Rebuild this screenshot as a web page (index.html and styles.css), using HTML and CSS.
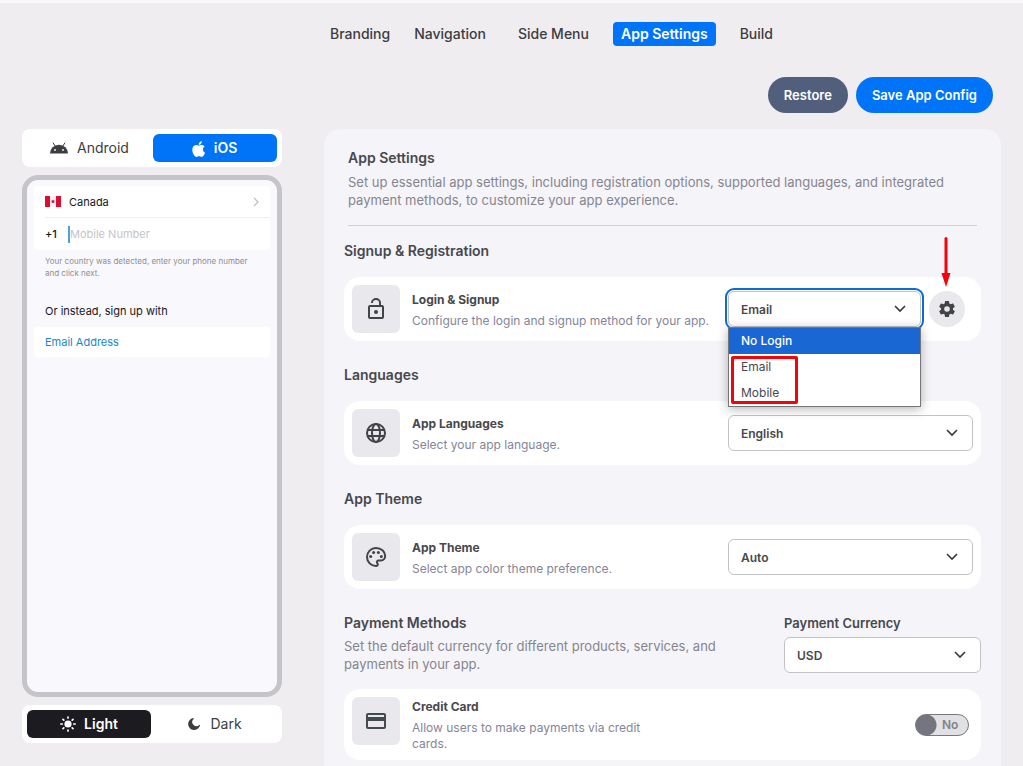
FILE: index.html
```html
<!DOCTYPE html>
<html lang="en">
<head>
<meta charset="utf-8">
<meta name="viewport" content="width=device-width, initial-scale=1">
<title>App Settings</title>
<link rel="stylesheet" href="styles.css">
</head>
<body>
<nav class="tabs">
  <a class="tab" href="#">Branding</a>
  <a class="tab tab-wide" href="#">Navigation</a>
  <a class="tab" href="#">Side Menu</a>
  <a class="tab tab-active" href="#">App Settings</a>
  <a class="tab" href="#">Build</a>
</nav>
<div class="actions">
  <button class="pill pill-slate" type="button">Restore</button>
  <button class="pill pill-blue" type="button">Save App Config</button>
</div>
<div class="columns">
  <aside class="preview">
    <div class="segment">
      <button class="seg" type="button">
        <svg class="ico-android" viewBox="0 0 20 12" aria-hidden="true"><path d="M4.2 1l1.9 3M15.8 1l-1.9 3" stroke="#3c3d41" stroke-width="1" stroke-linecap="round"/><path d="M1 11.5a9 8.8 0 0 1 18 0z" fill="#3c3d41"/><circle cx="6" cy="8" r=".9" fill="#fff"/><circle cx="14" cy="8" r=".9" fill="#fff"/></svg>
        Android
      </button>
      <button class="seg seg-blue" type="button">
        <svg class="ico-apple" viewBox="3.5 0 17 22" aria-hidden="true"><path fill="#fff" d="M17.05 12.54c-.03-2.89 2.36-4.27 2.47-4.34-1.35-1.97-3.44-2.24-4.19-2.27-1.78-.18-3.48 1.05-4.38 1.05-.9 0-2.3-1.02-3.78-1-1.94.03-3.74 1.13-4.74 2.87-2.02 3.51-.52 8.71 1.45 11.56.96 1.39 2.11 2.96 3.62 2.9 1.45-.06 2-.94 3.75-.94s2.25.94 3.78.91c1.56-.03 2.55-1.42 3.51-2.82 1.1-1.62 1.56-3.18 1.58-3.26-.03-.02-3.03-1.16-3.07-4.66zM14.17 4.06c.8-.97 1.34-2.32 1.19-3.66-1.15.05-2.55.77-3.37 1.73-.74.86-1.39 2.23-1.21 3.54 1.28.1 2.59-.65 3.39-1.61z"/></svg>
        iOS
      </button>
    </div>
    <div class="phone">
      <div class="phone-card">
        <div class="country">
          <svg class="flag" viewBox="0 0 16 11" aria-hidden="true"><path fill="#fbf0f2" d="M0 0h16v11H0z"/><path fill="#d80f33" d="M0 0h5v11H0zM11 0h5v11h-5zM8 3.8l.6.8 1-.2-.3 1.2.2.6-1.2.9H7.700l-1.200-.9.2-.6-.3-1.200 1 .2z"/></svg>
          <span class="grow">Canada</span>
          <svg class="ico-next" viewBox="0 0 6 10" aria-hidden="true"><path d="M1 1l4 4-4 4" fill="none" stroke="#bcbcc1" stroke-width="1.200"/></svg>
        </div>
        <div class="number">
          <span class="code">+1</span>
          <input class="number-input" type="tel" placeholder="Mobile Number" aria-label="Mobile Number">
        </div>
      </div>
      <p class="phone-hint">Your country was detected, enter your phone number and click next.</p>
      <p class="phone-alt">Or instead, sign up with</p>
      <a class="phone-email" href="#">Email Address</a>
    </div>
    <div class="segment">
      <button class="seg seg-dark" type="button">
        <svg class="ico-sun" viewBox="0 0 16 16" aria-hidden="true"><circle cx="8" cy="8" r="3.600" fill="#fff"/><path d="M8 1v1M8 14v1M.8 8H2.200M13.800 8h1.400M3 3.400l.8.7M12.200 11.900l.8.7M3 12.600l.8-.7M12.200 4.100l.8-.7" stroke="#fff" stroke-width="1.700" stroke-linecap="round"/></svg>
        Light
      </button>
      <button class="seg" type="button">
        <svg class="ico-moon" viewBox="0 0 12 12" aria-hidden="true"><path fill="#3c3d41" d="M5.200.1A6 6 0 1 0 12 7.200a.5.5 0 0 0-.8-.3A3.900 3.900 0 0 1 5.600 1 .5.5 0 0 0 5.200.1z"/></svg>
        Dark
      </button>
    </div>
  </aside>
  <main class="panel">
    <header class="intro">
      <h1 class="intro-title">App Settings</h1>
      <p class="desc">Set up essential app settings, including registration options, supported languages, and integrated payment methods, to customize your app experience.</p>
    </header>

    <section class="group">
      <h2 class="heading">Signup &amp; Registration</h2>
      <div class="card">
        <span class="tile"><svg class="ico" viewBox="0 0 24 24" aria-hidden="true"><path fill="#414347" d="M12 17a2 2 0 1 0 0-4 2 2 0 0 0 0 4zm6-9h-1V6a5 5 0 0 0-10 0h1.900a3.100 3.100 0 0 1 6.200 0v2H6a2 2 0 0 0-2 2v10a2 2 0 0 0 2 2h12a2 2 0 0 0 2-2V10a2 2 0 0 0-2-2zm0 12H6V10h12z"/></svg></span>
        <div class="info"><label class="name" for="login">Login &amp; Signup</label><p class="note">Configure the login and signup method for your app.</p></div>
        <div class="control control-gear">
          <div class="picker">
            <select class="select select-focus" id="login"><option>Email</option></select>
            <svg class="chev" viewBox="0 0 12 8" aria-hidden="true"><path d="M1 1l5 5 5-5" fill="none" stroke="#36373b" stroke-width="1.600"/></svg>
            <ul class="menu">
              <li class="option option-on">No Login</li>
              <li class="option">Email</li>
              <li class="option">Mobile</li>
            </ul>
            <span class="mark"></span>
          </div>
          <div class="gear-wrap">
            <button class="gear" type="button" aria-label="Login settings"><svg class="ico-gear" viewBox="2 2 20 20" aria-hidden="true"><path fill="#414347" d="M19.430 12.980c.04-.32.07-.64.07-.98s-.03-.66-.07-.98l2.110-1.650c.19-.15.24-.42.12-.64l-2-3.460c-.12-.22-.39-.3-.61-.22l-2.490 1c-.52-.4-1.080-.73-1.690-.98l-.38-2.650A.49.49 0 0 0 14 2h-4c-.25 0-.46.18-.49.42l-.38 2.650c-.61.25-1.170.59-1.690.98l-2.490-1c-.23-.09-.49 0-.61.22l-2 3.460c-.13.22-.07.49.12.64l2.110 1.650c-.04.32-.07.65-.07.98s.03.66.07.98l-2.110 1.650c-.19.15-.24.42-.12.64l2 3.460c.12.22.39.3.61.22l2.490-1c.52.4 1.080.73 1.690.98l.38 2.650c.03.24.24.42.49.42h4c.25 0 .46-.18.49-.42l.38-2.650c.61-.25 1.170-.59 1.690-.98l2.490 1c.23.09.49 0 .61-.22l2-3.460c.12-.22.07-.49-.12-.64zM12 15.500a3.500 3.500 0 1 1 0-7 3.500 3.500 0 0 1 0 7z"/></svg></button>
            <svg class="arrow" viewBox="0 0 10 50" aria-hidden="true"><path d="M5 1.500v37" stroke="#f3040c" stroke-width="3" stroke-linecap="round"/><path d="M.5 36h9L5 50z" fill="#f3040c"/></svg>
          </div>
        </div>
      </div>
    </section>

    <section class="group">
      <h2 class="heading">Languages</h2>
      <div class="card">
        <span class="tile"><svg class="ico" viewBox="0 0 24 24" aria-hidden="true"><g fill="none" stroke="#414347" stroke-width="2"><circle cx="12" cy="12" r="9"/><ellipse cx="12" cy="12" rx="4" ry="9"/><path d="M3.500 9h17M3.500 15h17"/></g></svg></span>
        <div class="info"><label class="name" for="lang">App Languages</label><p class="note">Select your app language.</p></div>
        <div class="control">
          <div class="picker">
            <select class="select" id="lang"><option>English</option></select>
            <svg class="chev" viewBox="0 0 12 8" aria-hidden="true"><path d="M1 1l5 5 5-5" fill="none" stroke="#36373b" stroke-width="1.600"/></svg>
          </div>
        </div>
      </div>
    </section>

    <section class="group">
      <h2 class="heading">App Theme</h2>
      <div class="card">
        <span class="tile"><svg class="ico" viewBox="0 0 24 24" aria-hidden="true"><path d="M12 3a9 9 0 0 0 0 18c1.200 0 1.800-.8 1.800-1.700 0-.5-.2-.8-.5-1.200-.9-1.100-.2-2.600 1.300-2.600H17a4.500 4.500 0 0 0 4.200-4.500C21.200 6.500 17 3 12 3z" fill="none" stroke="#414347" stroke-width="2"/><g fill="#414347"><circle cx="6.700" cy="11.500" r="1.500"/><circle cx="9.600" cy="7.600" r="1.500"/><circle cx="14.400" cy="7.600" r="1.500"/><circle cx="17.300" cy="11.500" r="1.500"/></g></svg></span>
        <div class="info"><label class="name" for="theme">App Theme</label><p class="note">Select app color theme preference.</p></div>
        <div class="control">
          <div class="picker">
            <select class="select" id="theme"><option>Auto</option></select>
            <svg class="chev" viewBox="0 0 12 8" aria-hidden="true"><path d="M1 1l5 5 5-5" fill="none" stroke="#36373b" stroke-width="1.600"/></svg>
          </div>
        </div>
      </div>
    </section>

    <section class="group">
      <div class="payment">
        <div class="payment-text">
          <h2 class="heading">Payment Methods</h2>
          <p class="desc">Set the default currency for different products, services, and payments in your app.</p>
        </div>
        <div class="currency">
          <label class="currency-label" for="currency">Payment Currency</label>
          <div class="picker">
            <select class="select" id="currency"><option>USD</option></select>
            <svg class="chev" viewBox="0 0 12 8" aria-hidden="true"><path d="M1 1l5 5 5-5" fill="none" stroke="#36373b" stroke-width="1.600"/></svg>
          </div>
        </div>
      </div>
      <div class="card">
        <span class="tile"><svg class="ico" viewBox="0 0 24 24" aria-hidden="true"><path fill="#414b50" fill-rule="evenodd" d="M4 4h16a2 2 0 0 1 2 2v12a2 2 0 0 1-2 2H4a2 2 0 0 1-2-2V6a2 2 0 0 1 2-2zm0 2v2h16V6zm0 6v6h16v-6z"/></svg></span>
        <div class="info info-narrow"><span class="name">Credit Card</span><p class="note">Allow users to make payments via credit cards.</p></div>
        <label class="toggle"><input class="toggle-input" type="checkbox" aria-label="Credit Card"><span class="toggle-text">No</span></label>
      </div>
    </section>
  </main>
</div>
</body>
</html>
```
FILE: styles.css
```css
* {
  box-sizing: border-box;
}

body {
  display: flex;
  flex-direction: column;
  margin: 0;
  min-height: 100vh;
  border-top: 3px solid #f9f9fd;
  background: #efedf0;
  color: #47484d;
  font-family: Inter, "Open Sans", sans-serif;
  font-size: 14px;
}

h1, h2, p, ul {
  margin: 0;
  padding: 0;
}

button, select, input {
  margin: 0;
  border: 0;
  background: none;
  color: inherit;
  font: inherit;
}

a {
  color: inherit;
  text-decoration: none;
}

svg {
  display: block;
  flex: none;
}

/* Top navigation */
.tabs {
  display: flex;
  justify-content: center;
  gap: 16px;
  padding: 19px 0 0 80px;
}

.tab {
  padding: 0 8px;
  border-radius: 4px;
  color: #3c3d41;
  font-weight: 500;
  line-height: 24px;
}

.tab-wide {
  margin-left: -8px;
}

.tab-active {
  background: #0074f8;
  color: #fff;
  font-weight: 600;
}

.actions {
  display: flex;
  justify-content: flex-end;
  gap: 8px;
  padding: 31px 30px 16px;
}

.pill {
  height: 36px;
  padding: 0 16px;
  border-radius: 18px;
  color: #fff;
  font-size: 13px;
  font-weight: 600;
}

.pill-slate {
  background: #515f7d;
}

.pill-blue {
  background: #0074f8;
}

.columns {
  flex: 1;
  display: flex;
  gap: 42px;
  padding: 0 22px;
}

/* Device preview */
.preview {
  flex: none;
  display: grid;
  align-content: start;
  gap: 8px;
  width: 260px;
}

.segment {
  display: grid;
  grid-template-columns: 1fr 1fr;
  gap: 2px;
  padding: 5px;
  border-radius: 8px;
  background: #fff;
}

.seg {
  display: flex;
  align-items: center;
  justify-content: center;
  gap: 8px;
  height: 28px;
  padding: 0;
  border-radius: 6px;
  color: #3c3d41;
  line-height: 26px;
}

.seg-blue {
  background: #0074f8;
  color: #fff;
  font-weight: 600;
}

.seg-dark {
  background: #1b1b20;
  color: #fff;
  font-weight: 600;
}

.ico-android {
  width: 20px;
  height: 12px;
}

.ico-apple {
  width: 13px;
  height: 15px;
  overflow: visible;
}

.ico-sun {
  width: 16px;
  height: 16px;
}

.ico-moon {
  width: 12px;
  height: 12px;
  margin-right: 2px;
}

.phone {
  height: 522px;
  padding: 6px 7px;
  border: 5px solid #c4c4c9;
  border-radius: 16px;
  background: #f9f8fd;
  color: #17171a;
  font-size: 11px;
}

.phone-card {
  padding-left: 11px;
  border-radius: 4px;
  background: #fff;
}

.country,
.number {
  display: flex;
  align-items: center;
  height: 32px;
}

.country {
  gap: 8px;
  padding-right: 11px;
  border-bottom: 1px solid #efeff1;
}

.grow {
  flex: 1;
}

.flag {
  width: 16px;
  height: 11px;
}

.ico-next {
  width: 6px;
  height: 10px;
}

.code {
  width: 23px;
  font-weight: 500;
}

.number-input {
  flex: 1;
  min-width: 0;
  height: 17px;
  padding: 0;
  border-left: 2px solid #4aa0e0;
}

.number-input::placeholder {
  color: #c4c4c8;
  opacity: 1;
}

.phone-hint {
  padding: 5px 11px 0;
  color: #8e8e94;
  font-size: 8px;
  line-height: 12px;
}

.phone-alt {
  padding: 24px 11px 8px;
  line-height: 16px;
}

.phone-email {
  display: block;
  padding: 0 11px;
  border-radius: 4px;
  background: #fff;
  color: #1787cd;
  line-height: 30px;
}

/* Settings panel */
.panel {
  flex: 1;
  min-width: 0;
  padding: 19px 20px 6px;
  border-radius: 16px 16px 0 0;
  background: #f5f4f9;
}

.intro {
  margin: 0 4px 15px;
  padding-bottom: 16px;
  border-bottom: 1px solid #d0d0d5;
}

.intro-title {
  margin-bottom: 5px;
  font-size: 14px;
  font-weight: 600;
  line-height: 20px;
}

.desc {
  color: #85858f;
  font-size: 13px;
  line-height: 18px;
}

.group + .group {
  margin-top: 24px;
}

.heading {
  font-size: 14px;
  font-weight: 600;
  line-height: 20px;
}

.card {
  display: flex;
  align-items: center;
  gap: 12px;
  margin-top: 16px;
  padding: 8px;
  border-radius: 16px;
  background: #fff;
}

.tile {
  flex: none;
  align-self: flex-start;
  display: grid;
  place-items: center;
  width: 48px;
  height: 48px;
  border-radius: 6px;
  background: #e9e8ec;
}

.ico {
  width: 24px;
  height: 24px;
}

.info {
  flex: 1;
  min-width: 0;
  display: grid;
  gap: 3px;
}

.name {
  font-size: 12px;
  font-weight: 700;
  line-height: 20px;
}

.note {
  color: #85859a;
  font-size: 12px;
  line-height: 16px;
}

.info-narrow .note {
  max-width: 240px;
}

.control {
  flex: none;
  width: 245px;
}

.control-gear {
  display: flex;
  gap: 8px;
  padding-right: 8px;
}

.picker {
  position: relative;
  flex: 1;
  display: grid;
  align-items: center;
}

.select {
  grid-area: 1 / 1;
  appearance: none;
  width: 100%;
  height: 36px;
  padding: 0 12px;
  border: 1px solid #c3c3c7;
  border-radius: 6px;
  background: #fff;
  font-size: 12px;
  font-weight: 600;
}

.select-focus {
  outline: 2px solid #0b6cd6;
  outline-offset: 1px;
}

.chev {
  grid-area: 1 / 1;
  justify-self: end;
  width: 12px;
  height: 8px;
  margin-right: 15px;
  pointer-events: none;
}

.menu {
  position: absolute;
  z-index: 2;
  top: 36px;
  left: 0;
  right: 0;
  border: 1px solid #76767a;
  background: #fff;
  box-shadow: 0 2px 10px rgba(0, 0, 0, 0.3);
  list-style: none;
}

.option {
  padding: 0 12px;
  font-size: 12px;
  line-height: 26px;
}

.option-on {
  background: #1967d2;
  color: #fff;
  font-weight: 500;
}

.mark {
  position: absolute;
  z-index: 3;
  top: 65px;
  left: 3px;
  width: 67px;
  height: 48px;
  border: 3px solid #f3040c;
  border-radius: 2px;
}

.gear-wrap {
  position: relative;
}

.gear {
  display: grid;
  place-items: center;
  width: 36px;
  height: 36px;
  padding: 0;
  border-radius: 50%;
  background: #e9e8ec;
}

.ico-gear {
  width: 16px;
  height: 16px;
}

.arrow {
  position: absolute;
  bottom: 40px;
  left: 12px;
  width: 10px;
  height: 50px;
}

.payment {
  display: flex;
  justify-content: space-between;
  gap: 12px;
}

.payment-text {
  display: grid;
  align-content: start;
  gap: 4px;
  max-width: 380px;
}

.currency {
  display: grid;
  gap: 4px;
  width: 197px;
}

.currency-label {
  font-size: 13px;
  font-weight: 600;
  line-height: 20px;
}

.toggle {
  position: relative;
  display: grid;
  align-items: center;
  width: 54px;
  margin-right: 4px;
}

.toggle-input {
  grid-area: 1 / 1;
  appearance: none;
  width: 54px;
  height: 22px;
  border: 1px solid #77777d;
  border-radius: 11px;
  background: radial-gradient(circle at 10px 10px, #74757e 10px, #e1e1e5 11px);
}

.toggle-text {
  grid-area: 1 / 1;
  padding-left: 27px;
  color: #828288;
  font-size: 12px;
  font-weight: 600;
  pointer-events: none;
}
```
